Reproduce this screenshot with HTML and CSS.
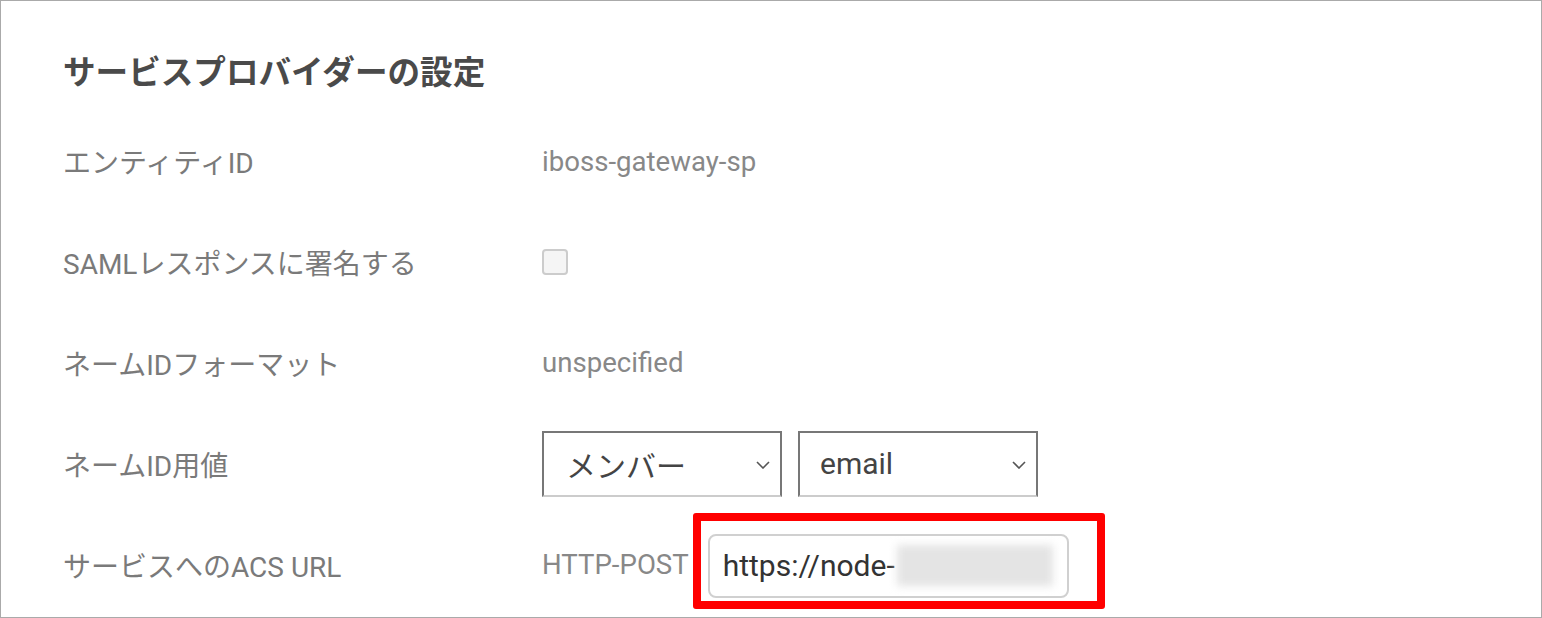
FILE: index.html
```html
<!DOCTYPE html>
<html lang="ja">
<head>
  <meta charset="UTF-8" />
  <meta name="viewport" content="width=device-width, initial-scale=1.0"/>
  <title>サービスプロバイダーの設定</title>
  <link rel="stylesheet" href="styles.css">
</head>
<body>

  <div class="panel">
    <h1>サービスプロバイダーの設定</h1>

    <div class="row">
      <div class="label">エンティティID</div>
      <div class="value">iboss-gateway-sp</div>
    </div>

    <div class="row">
      <div class="label">SAMLレスポンスに署名する</div>
      <div class="value"><span class="checkbox"></span></div>
    </div>

    <div class="row">
      <div class="label">ネームIDフォーマット</div>
      <div class="value">unspecified</div>
    </div>

    <div class="row">
      <div class="label">ネームID用値</div>
      <div class="value selects">
        <div class="select">
          <span>メンバー</span>
          <svg class="chevron" width="14" height="8" viewBox="0 0 14 8"><path d="M1 1l6 6 6-6" fill="none" stroke="#555" stroke-width="1.6"/></svg>
        </div>
        <div class="select">
          <span>email</span>
          <svg class="chevron" width="14" height="8" viewBox="0 0 14 8"><path d="M1 1l6 6 6-6" fill="none" stroke="#555" stroke-width="1.6"/></svg>
        </div>
      </div>
    </div>

    <div class="row">
      <div class="label">サービスへのACS URL</div>
      <div class="value">
        <span>HTTP-POST</span>
        <div class="highlight">
          <div class="url-input">https://node-<span class="masked"></span></div>
        </div>
      </div>
    </div>
  </div>

</body>
</html>
```

FILE: styles.css
```css
html, body {
  margin: 0;
  padding: 0;
  background: #fff;
}
body {
  font-family: Roboto, "Noto Sans CJK JP", sans-serif;
}
.panel {
  box-sizing: border-box;
  width: 1542px;
  height: 618px;
  border: 1px solid #aaa;
  padding: 49px 0 0 62px;
  overflow: hidden;
}
h1 {
  margin: 0 0 15px;
  font-size: 32.6px;
  line-height: 46px;
  font-weight: 700;
  color: #4a4a4a;
}
.row {
  display: flex;
  align-items: center;
  height: 100.8px;
}
.label {
  width: 479px;
  font-size: 28px;
  color: #7a7a7a;
}
.value {
  display: flex;
  align-items: center;
  font-size: 27.6px;
  color: #888;
}
.checkbox {
  display: block;
  width: 22px;
  height: 22px;
  border: 2px solid #ccc;
  border-radius: 4px;
  background: #f5f5f5;
}
.selects {
  gap: 16px;
}
.select {
  box-sizing: border-box;
  width: 240px;
  height: 66px;
  display: flex;
  align-items: center;
  justify-content: space-between;
  padding: 0 10px 0 22px;
  border: 2px solid #777;
  border-bottom-color: #ccc;
  font-size: 30px;
  color: #444;
}
.select + .select {
  padding-left: 20px;
}
.chevron {
  margin-top: 2px;
}
.highlight {
  margin: 0 0 8px 4px;
  padding: 13px 28px 3px 7px;
  border: 8px solid #f00;
  border-radius: 3px;
}
.url-input {
  box-sizing: border-box;
  width: 361px;
  height: 64px;
  display: flex;
  align-items: center;
  padding-left: 13px;
  border: 2px solid #d0d0d0;
  border-radius: 8px;
  font-size: 30px;
  color: #333;
  white-space: nowrap;
  overflow: hidden;
}
.masked {
  display: block;
  width: 156px;
  height: 41px;
  margin-left: 2px;
  background: #e4e4e4;
  filter: blur(4px);
}
```
